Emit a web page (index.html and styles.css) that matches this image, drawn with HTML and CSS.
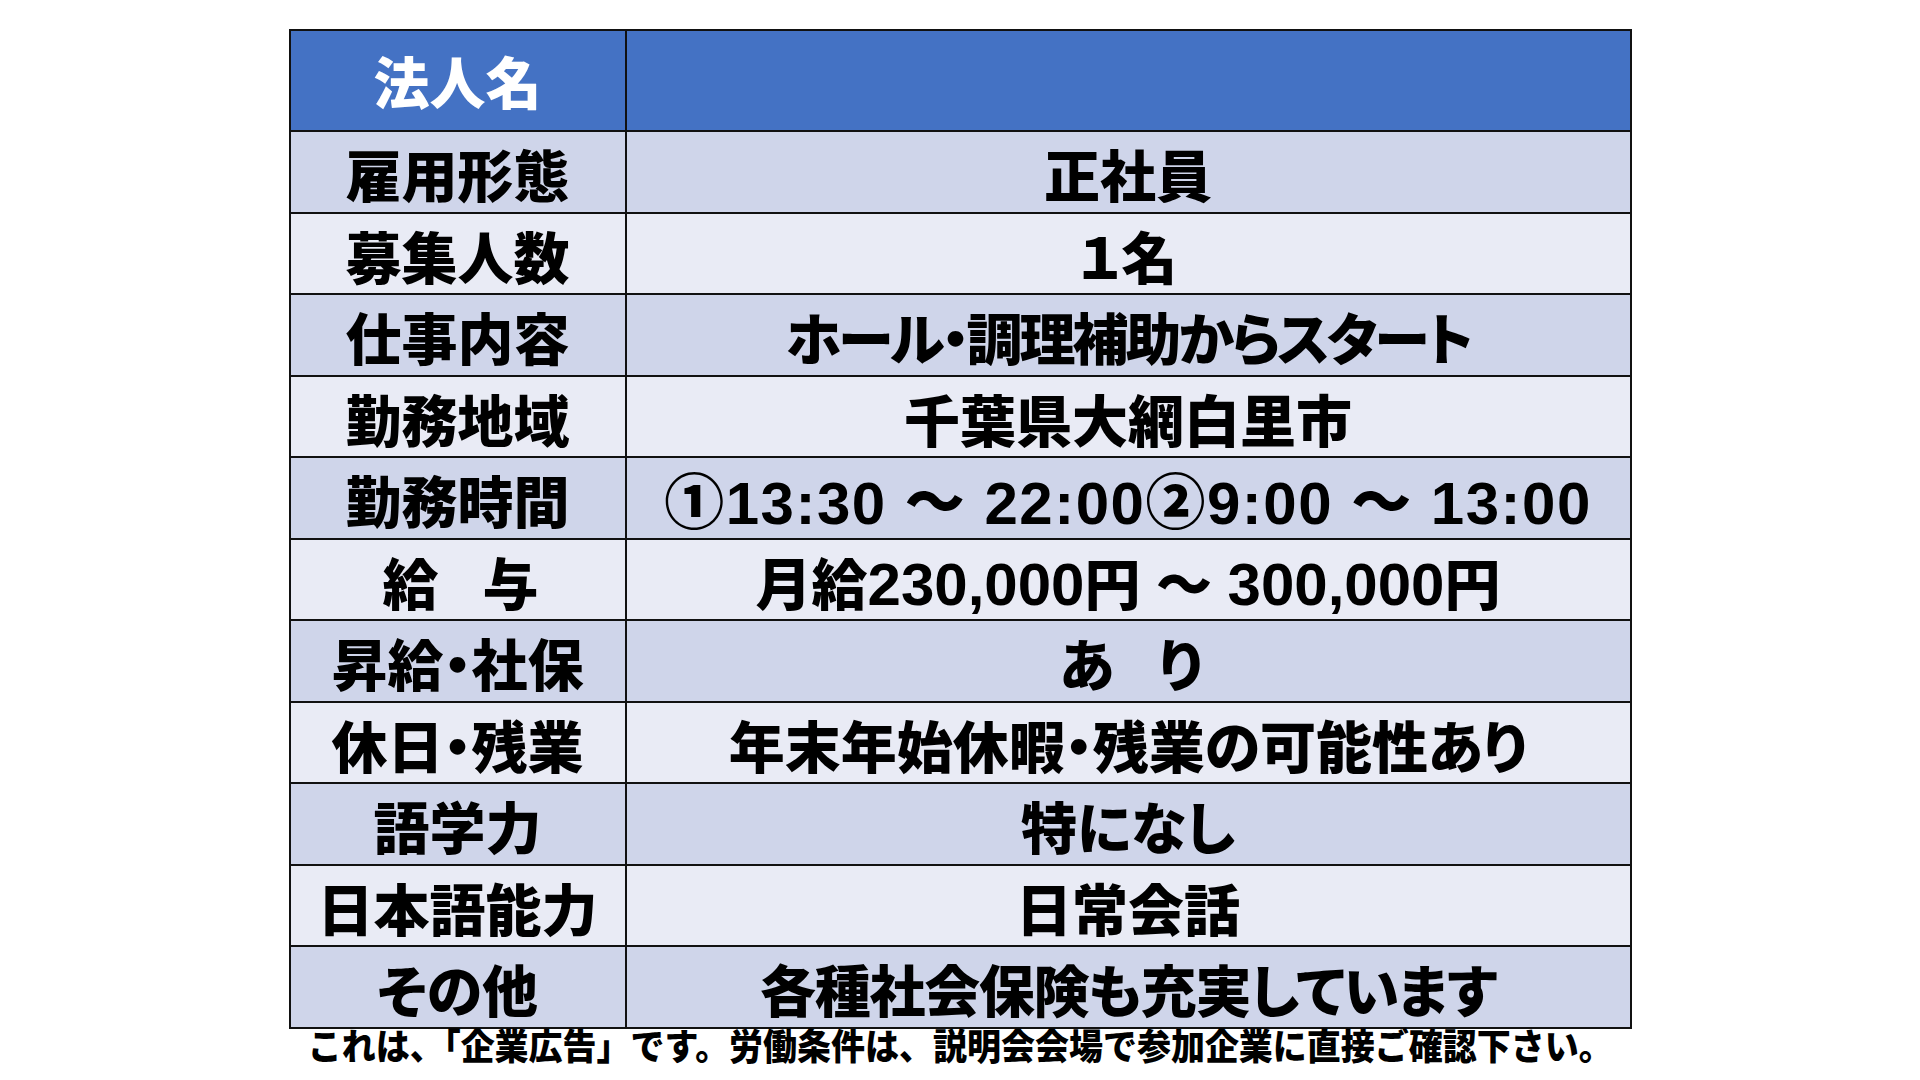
FILE: index.html
```html
<!DOCTYPE html>
<html lang="ja">
<head>
<meta charset="utf-8">
<title>求人票</title>
<link rel="stylesheet" href="styles.css">
</head>
<body>
<main class="page">
  <table class="sheet">
    <tr class="head">
      <th class="label">法人名</th>
      <td class="value"></td>
    </tr>
    <tr class="dark">
      <th class="label">雇用形態</th>
      <td class="value">正社員</td>
    </tr>
    <tr class="light">
      <th class="label">募集人数</th>
      <td class="value">１名</td>
    </tr>
    <tr class="dark">
      <th class="label">仕事内容</th>
      <td class="value tight">ホール・調理補助からスタート</td>
    </tr>
    <tr class="light">
      <th class="label">勤務地域</th>
      <td class="value">千葉県大網白里市</td>
    </tr>
    <tr class="dark">
      <th class="label">勤務時間</th>
      <td class="value time">①13:30 ～ 22:00②9:00 ～ 13:00</td>
    </tr>
    <tr class="light">
      <th class="label spaced">給　与</th>
      <td class="value">月給<span class="num">230,000</span>円 ～ <span class="num">300,000</span>円</td>
    </tr>
    <tr class="dark">
      <th class="label">昇給・社保</th>
      <td class="value spaced">あ　り</td>
    </tr>
    <tr class="light">
      <th class="label">休日・残業</th>
      <td class="value">年末年始休暇・残業の可能性あり</td>
    </tr>
    <tr class="dark">
      <th class="label">語学力</th>
      <td class="value">特になし</td>
    </tr>
    <tr class="light">
      <th class="label">日本語能力</th>
      <td class="value">日常会話</td>
    </tr>
    <tr class="dark">
      <th class="label">その他</th>
      <td class="value snug">各種社会保険も充実しています</td>
    </tr>
  </table>
  <p class="note">これは、「企業広告」です。労働条件は、説明会会場で参加企業に直接ご確認下さい。</p>
</main>
</body>
</html>
```

FILE: styles.css
```css
html, body {
  margin: 0;
  padding: 0;
  background: #ffffff;
}

body {
  width: 1920px;
  height: 1080px;
  overflow: hidden;
  font-family: "Liberation Sans", "Noto Sans CJK JP", sans-serif;
  font-weight: 900;
  color: #000000;
  font-feature-settings: "palt";
}

.page {
  display: flex;
  flex-direction: column;
  align-items: center;
  padding-top: 29px;
}

.sheet {
  width: 1343px;
  border-collapse: collapse;
  table-layout: fixed;
  border: 2px solid #111;
}

.sheet th,
.sheet td {
  border: 2px solid #111;
  padding: 13px 0 0 0;
  text-align: center;
  vertical-align: middle;
  font-size: 56px;
  line-height: 64px;
  font-weight: 900;
  white-space: nowrap;
}

.sheet .label {
  width: 334px;
}

.sheet tr {
  height: 81.5px;
}

.sheet tr.head {
  height: 101px;
  background: #4472c4;
}

.sheet tr.head .label {
  color: #ffffff;
  padding-top: 8px;
}

.sheet tr.dark {
  background: #cfd5ea;
}

.sheet tr.light {
  background: #e9ebf5;
}

.sheet .spaced {
  letter-spacing: -6px;
}

.value.tight {
  letter-spacing: -3px;
}

.value.snug {
  letter-spacing: -1.3px;
}

.value.time {
  font-size: 60px;
  letter-spacing: 1.5px;
}

.num {
  font-size: 60px;
}

.note {
  margin: 0;
  font-size: 36px;
  line-height: 38px;
  font-feature-settings: normal;
  white-space: nowrap;
  transform: scaleX(0.944);
}
```
